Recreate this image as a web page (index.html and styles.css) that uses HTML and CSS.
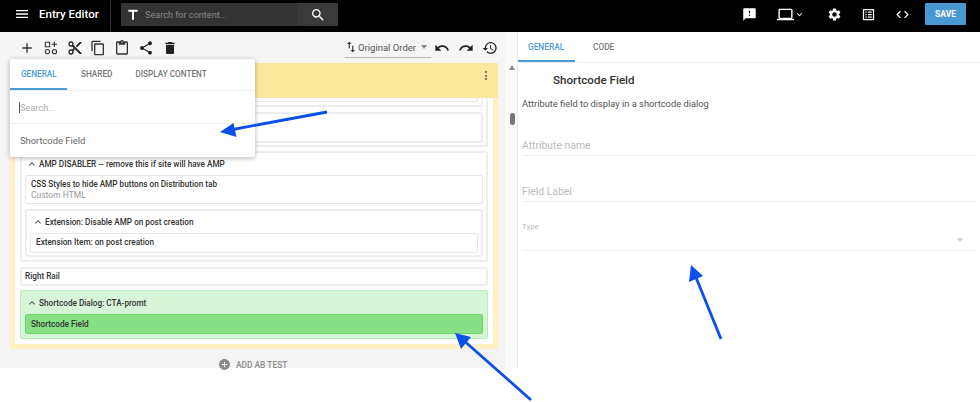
FILE: index.html
```html
<!DOCTYPE html>
<html lang="en">
<head>
<meta charset="utf-8">
<title>Entry Editor</title>
<link rel="stylesheet" href="styles.css">
</head>
<body>
<header class="topbar">
  <svg class="ic menu" viewBox="0 0 24 24" width="16" height="16"><path fill="#fff" d="M3 18h18v-2H3v2zm0-5h18v-2H3v2zm0-7v2h18V6H3z"/></svg>
  <div class="app-title">Entry Editor</div>
  <div class="search">
    <div class="search-main">
      <svg viewBox="0 0 24 24" width="16" height="16"><path fill="#fff" d="M5 4v3h5.500v12h3V7H19V4z"/></svg>
      <span>Search for content...</span>
    </div>
    <div class="search-btn">
      <svg viewBox="0 0 24 24" width="16" height="16"><path fill="#fff" d="M15.500 14h-.79l-.28-.27A6.470 6.470 0 0 0 16 9.500 6.500 6.500 0 1 0 9.500 16c1.610 0 3.090-.59 4.230-1.570l.27.28v.79l5 4.990L20.490 19l-4.990-5zm-6 0C7.010 14 5 11.990 5 9.500S7.010 5 9.500 5 14 7.010 14 9.500 11.990 14 9.500 14z"/></svg>
    </div>
  </div>
  <div class="top-actions">
    <svg class="a1" viewBox="0 0 24 24" width="15" height="15"><path fill="#fff" d="M20 2H4c-1.100 0-2 .9-2 2v18l4-4h14c1.100 0 2-.9 2-2V4c0-1.100-.9-2-2-2zm-7 12h-2v-2h2v2zm0-4h-2V6h2v4z"/></svg>
    <svg class="a2" viewBox="0 0 24 24" width="17" height="17"><path fill="#fff" d="M20 18c1.100 0 2-.9 2-2V6c0-1.100-.9-2-2-2H4c-1.100 0-2 .9-2 2v10c0 1.100.9 2 2 2H0v2h24v-2h-4zM4 5.500h16v11H4v-11z"/></svg>
    <svg class="a3" viewBox="0 0 24 24" width="11" height="11"><path fill="#fff" d="M7.410 8.590 12 13.170l4.590-4.580L18 10l-6 6-6-6z"/></svg>
    <svg class="a4" viewBox="0 0 24 24" width="15" height="15"><path fill="#fff" d="M19.140 12.940c.04-.3.060-.61.060-.94s-.02-.64-.07-.94l2.030-1.580a.49.49 0 0 0 .12-.61l-1.920-3.320a.49.49 0 0 0-.59-.22l-2.390.96a7 7 0 0 0-1.620-.94l-.36-2.540a.48.48 0 0 0-.48-.41h-3.840a.47.47 0 0 0-.47.41l-.36 2.540c-.59.24-1.130.57-1.620.94l-2.390-.96a.49.49 0 0 0-.59.22L2.740 8.870a.48.48 0 0 0 .12.61l2.030 1.580c-.05.3-.09.63-.09.94s.02.64.07.94l-2.030 1.580a.49.49 0 0 0-.12.61l1.920 3.320c.12.22.37.29.59.22l2.390-.96c.5.38 1.030.7 1.620.94l.36 2.540c.05.24.24.41.48.41h3.840c.24 0 .44-.17.47-.41l.36-2.540c.59-.24 1.130-.56 1.620-.94l2.390.96c.22.08.47 0 .59-.22l1.920-3.320a.48.48 0 0 0-.12-.61l-2.010-1.580zM12 15.600A3.610 3.610 0 0 1 8.400 12 3.610 3.610 0 0 1 12 8.400a3.610 3.610 0 0 1 3.600 3.600 3.610 3.610 0 0 1-3.600 3.600z"/></svg>
    <svg class="a5" viewBox="0 0 24 24" width="15" height="15"><path fill="#fff" d="M19 5v14H5V5h14m1.100-2H3.900c-.5 0-.9.4-.9.9v16.200c0 .4.400.9.900.9h16.200c.4 0 .9-.5.9-.9V3.900c0-.5-.5-.9-.9-.9zM11 7h6v2h-6V7zm0 4h6v2h-6v-2zm0 4h6v2h-6zM7 7h2v2H7zm0 4h2v2H7zm0 4h2v2H7z"/></svg>
    <svg class="a6" viewBox="0 0 24 24" width="15" height="15"><path fill="#fff" d="M9.400 16.600 4.800 12l4.600-4.600L8 6l-6 6 6 6 1.400-1.400zm5.200 0 4.600-4.600-4.600-4.600L16 6l6 6-6 6-1.400-1.400z"/></svg>
    <button class="save">SAVE</button>
  </div>
</header>

<main class="workspace">
  <section class="editor">
    <div class="toolbar">
      <div class="tools">
        <svg viewBox="0 0 24 24" width="16" height="16"><path fill="#333" d="M19 13h-6v6h-2v-6H5v-2h6V5h2v6h6v2z"/></svg>
        <svg viewBox="0 0 24 24" width="16" height="16"><path fill="none" stroke="#333" stroke-width="1.600" d="M3.500 3.500h6.500v6.500H3.500zM3.500 17.500a3.200 3.200 0 1 0 6.400 0 3.200 3.200 0 1 0-6.400 0M14 17.500a3.200 3.200 0 1 0 6.400 0 3.200 3.200 0 1 0-6.400 0"/><path fill="#333" d="M16.200 2.500h1.800v3h3v1.800h-3v3h-1.800v-3h-3V5.500h3z"/></svg>
        <svg viewBox="0 0 24 24" width="16" height="16"><path fill="#222" d="M9.640 7.640c.23-.5.360-1.050.360-1.640 0-2.210-1.790-4-4-4S2 3.790 2 6s1.790 4 4 4c.59 0 1.140-.13 1.640-.36L10 12l-2.360 2.360C7.140 14.130 6.590 14 6 14c-2.210 0-4 1.790-4 4s1.790 4 4 4 4-1.790 4-4c0-.59-.13-1.140-.36-1.640L12 14l7 7h3v-1L9.640 7.640zM6 8a2 2 0 1 1 0-4 2 2 0 0 1 0 4zm0 12a2 2 0 1 1 0-4 2 2 0 0 1 0 4zm6-7.500a.5.5 0 1 1 0-1 .5.5 0 0 1 0 1zM19 3l-6 6 2 2 7-7V3h-3z"/></svg>
        <svg viewBox="0 0 24 24" width="16" height="16"><path fill="#333" d="M16 1H4c-1.100 0-2 .9-2 2v14h2V3h12V1zm3 4H8c-1.100 0-2 .9-2 2v14c0 1.100.9 2 2 2h11c1.100 0 2-.9 2-2V7c0-1.100-.9-2-2-2zm0 16H8V7h11v14z"/></svg>
        <svg viewBox="0 0 24 24" width="16" height="16"><path fill="#333" d="M19 2h-4.180C14.400.84 13.300 0 12 0c-1.300 0-2.400.84-2.820 2H5c-1.100 0-2 .9-2 2v16c0 1.100.9 2 2 2h14c1.100 0 2-.9 2-2V4c0-1.100-.9-2-2-2zm-7 0c.55 0 1 .45 1 1s-.45 1-1 1-1-.45-1-1 .45-1 1-1zm7 18H5V4h2v3h10V4h2v16z"/></svg>
        <svg viewBox="0 0 24 24" width="16" height="16"><path fill="#222" d="M18 16.080c-.76 0-1.440.3-1.960.77L8.910 12.700c.05-.23.090-.46.090-.7s-.04-.47-.09-.7l7.050-4.110c.54.5 1.250.81 2.040.81 1.660 0 3-1.340 3-3s-1.340-3-3-3-3 1.340-3 3c0 .24.040.47.090.7L8.040 9.810C7.500 9.310 6.790 9 6 9c-1.660 0-3 1.340-3 3s1.340 3 3 3c.79 0 1.500-.31 2.040-.81l7.120 4.160c-.05.21-.08.43-.08.65 0 1.610 1.310 2.920 2.920 2.920s2.920-1.310 2.920-2.920-1.310-2.920-2.920-2.920z"/></svg>
        <svg viewBox="0 0 24 24" width="16" height="16"><path fill="#222" d="M6 19c0 1.100.9 2 2 2h8c1.100 0 2-.9 2-2V7H6v12zM19 4h-3.500l-1-1h-5l-1 1H5v2h14V4z"/></svg>
      </div>
      <div class="tools-right">
        <div class="order">
          <svg viewBox="0 0 24 24" width="14" height="14"><path fill="#333" d="M16 17.010V10h-2v7.010h-3L15 21l4-3.990h-3zM9 3 5 6.990h3V14h2V6.990h3L9 3z"/></svg>
          <span>Original Order</span>
          <i class="caret"></i>
        </div>
        <svg viewBox="0 0 24 24" width="16" height="16"><path fill="#222" d="M12.500 8c-2.650 0-5.050.99-6.900 2.600L2 7v9h9l-3.620-3.620c1.390-1.160 3.160-1.880 5.120-1.880 3.540 0 6.550 2.310 7.600 5.500l2.370-.78C21.080 11.030 17.150 8 12.500 8z"/></svg>
        <svg viewBox="0 0 24 24" width="16" height="16"><path fill="#222" d="M18.400 10.600C16.550 8.990 14.150 8 11.500 8c-4.650 0-8.580 3.030-9.960 7.220L3.900 16c1.050-3.190 4.050-5.500 7.600-5.500 1.950 0 3.730.72 5.120 1.880L13 16h9V7l-3.600 3.600z"/></svg>
        <svg viewBox="0 0 24 24" width="16" height="16"><path fill="#222" d="M13 3a9 9 0 0 0-9 9H1l3.890 3.890.07.14L9 12H6c0-3.870 3.130-7 7-7s7 3.130 7 7-3.130 7-7 7c-1.930 0-3.680-.79-4.940-2.060l-1.420 1.420A8.950 8.950 0 0 0 13 21a9 9 0 0 0 0-18zm-1 5v5l4.280 2.540.72-1.210-3.500-2.080V8H12z"/></svg>
      </div>
    </div>
    <div class="canvas">
      <div class="root">
        <div class="root-head"><span class="dots"><i></i><i></i><i></i></span></div>
        <div class="tree">
          <div class="group upper">
            <div class="stub"><div class="stub-inner"></div></div>
            <div class="blank"></div>
          </div>
          <div class="group amp">
            <div class="group-head"><svg class="chev" viewBox="0 0 24 24" width="12" height="12"><path fill="#555" d="M7.410 15.410 12 10.830l4.590 4.580L18 14l-6-6-6 6z"/></svg>AMP DISABLER -- remove this if site will have AMP</div>
            <div class="card two"><b>CSS Styles to hide AMP buttons on Distribution tab</b><small>Custom HTML</small></div>
            <div class="group ext">
              <div class="group-head"><svg class="chev" viewBox="0 0 24 24" width="12" height="12"><path fill="#555" d="M7.410 15.410 12 10.830l4.590 4.580L18 14l-6-6-6 6z"/></svg>Extension: Disable AMP on post creation</div>
              <div class="card one"><b>Extension Item: on post creation</b></div>
            </div>
          </div>
          <div class="card rail"><b>Right Rail</b></div>
          <div class="group green">
            <div class="group-head"><svg class="chev" viewBox="0 0 24 24" width="12" height="12"><path fill="#555" d="M7.410 15.410 12 10.830l4.590 4.580L18 14l-6-6-6 6z"/></svg>Shortcode Dialog: CTA-promt</div>
            <div class="card selected"><b>Shortcode Field</b></div>
          </div>
        </div>
      </div>
      <div class="ab"><svg viewBox="0 0 24 24" width="13" height="13"><path fill="#8a8a8a" d="M12 2C6.480 2 2 6.480 2 12s4.480 10 10 10 10-4.480 10-10S17.520 2 12 2zm5 11h-4v4h-2v-4H7v-2h4V7h2v4h4v2z"/></svg>ADD AB TEST</div>
    </div>
    <div class="popup">
      <div class="tabs pop-tabs">
        <span class="tab active">GENERAL</span><span class="tab">SHARED</span><span class="tab">DISPLAY CONTENT</span>
      </div>
      <div class="pop-search"><i class="cursor"></i>Search...</div>
      <div class="pop-item">Shortcode Field</div>
    </div>
  </section>
  <div class="scroll"><i class="up"></i><i class="thumb"></i></div>
  <aside class="panel">
    <div class="tabs side-tabs">
      <span class="tab active">GENERAL</span><span class="tab">CODE</span>
    </div>
    <h2>Shortcode Field</h2>
    <p>Attribute field to display in a shortcode dialog</p>
    <div class="field f1">Attribute name</div>
    <div class="field f2">Field Label</div>
    <div class="field f3"><small>Type</small><i class="caret light"></i></div>
  </aside>
</main>

<svg class="arrows" viewBox="0 0 980 402" width="980" height="402">
  <g stroke="#0b50e8" stroke-width="2.800" fill="#0b50e8">
    <path d="M327 112 230 130"/><path stroke="none" d="M220 132 233.500 123 236.500 137z"/>
    <path d="M531 400 462 339"/><path stroke="none" d="M455 333 471 337 461 349z"/>
    <path d="M721 339 695 275"/><path stroke="none" d="M691 265 703 276 689 282z"/>
  </g>
</svg>
</body>
</html>
```
FILE: styles.css
```css
* { box-sizing: border-box; }
html, body { margin: 0; height: 402px; overflow: hidden; background: #fff; }
body { font-family: Roboto, "Liberation Sans", sans-serif; font-size: 11px; color: #333; position: relative; }
svg { display: block; flex: none; }

.topbar { height: 32px; background: #000; display: flex; align-items: center; }
.menu { margin-left: 14px; margin-top: -4px; }
.app-title { margin-left: 9px; width: 72px; height: 32px; line-height: 28px; color: #fff; font-size: 11.600px; font-weight: 500; border-right: 1px solid #2a2a2a; }
.search { margin: -3px 0 0 10px; width: 217px; height: 23px; display: flex; background: #3a3a3a; }
.search-main { width: 176px; background: #333; display: flex; align-items: center; padding-left: 4px; color: #8a8a8a; font-size: 9.100px; gap: 4px; }
.search-btn { flex: 1; display: flex; align-items: center; justify-content: center; }
.top-actions { margin-left: auto; display: flex; align-items: center; margin-top: -4px; }
.a1 { margin-right: 20px; }
.a3 { margin: 0 22px 0 0; }
.a4 { margin-right: 19.500px; }
.a5 { margin-right: 18.500px; }
.a6 { margin-right: 15.500px; }
.save { width: 41px; height: 22px; margin-right: 14px; padding: 0; border: 0; border-radius: 1px; background: #4a98d3; color: #fff; font: 700 8.500px Roboto, sans-serif; }

.workspace { display: flex; height: 336px; align-items: flex-start; }
.editor { width: 505px; position: relative; }
.toolbar { height: 31px; background: #f5f5f5; display: flex; justify-content: space-between; align-items: center; padding: 0 0 0 19px; }
.tools { display: flex; gap: 7.800px; }
.tools-right { display: flex; align-items: center; gap: 8px; padding-right: 7px; }
.order { display: flex; align-items: center; width: 86px; height: 20px; border-bottom: 1px solid #bbb; margin-right: -5px; color: #555; font-size: 9.500px; white-space: nowrap; }
.order svg { margin-left: -1px; }
.caret { width: 0; height: 0; border: 3.500px solid transparent; border-top: 4px solid #888; border-bottom: 0; margin-left: 5px; }
.canvas { height: 305px; background: #f4f4f4; padding: 0 7px 0 10px; }
.root { height: 286px; border: 5px solid #fdf1c4; border-top: 0; background: #fff; border-radius: 1px; }
.root-head { height: 35px; margin: 0 -5px; background: #fbe89c; display: flex; justify-content: flex-end; padding: 8px 11.500px 0 0; }
.dots { display: flex; flex-direction: column; gap: 1.500px; }
.dots i { width: 2px; height: 2px; background: #555; border-radius: 50%; }
.tree { padding: 0 5px; display: flex; flex-direction: column; }
.group { border: 2px solid #eee; border-radius: 2px; }
.upper { height: 49px; border-top: 0; padding: 0 3px; }
.stub { height: 9px; border: 2px solid #eee; border-top: 0; padding: 0 3px; }
.stub-inner { height: 4px; border: 1px solid #e6e6e6; border-top: 0; }
.blank { height: 31px; margin-top: 5px; border: 2px solid #eee; border-radius: 2px; }
.group-head { display: flex; align-items: center; font-weight: 500; color: #333; font-size: 8.200px; gap: 1px; height: 22px; padding-left: 1px; }
.amp { margin-top: 4px; height: 111px; padding: 0 3px; }
.ext .group-head { padding-left: 2px; }
.card { background: #fff; border: 1px solid #e6e6e6; border-radius: 2px; padding-left: 5px; font-size: 8.200px; }
.card b { font-weight: 500; display: block; color: #333; }
.card small { font-size: 8.500px; color: #999; display: block; margin-top: 1px; }
.two { height: 29px; padding-top: 3px; }
.ext { margin-top: 5px; height: 48px; padding: 0 3px; }
.one { height: 20px; line-height: 17px; }
.rail { margin-top: 5px; height: 19px; line-height: 15px; border: 2px solid #eee; padding-left: 3px; }
.green { margin-top: 4px; height: 49px; background: #d7f5d7; border: 1px solid #b9eeb9; padding: 0 4px; }
.green .group-head { height: 23px; padding-left: 1px; }
.selected { height: 20px; line-height: 18px; background: #86e086; border: 1px solid #6ad66a; color: #333; }
.ab { height: 19px; display: flex; align-items: center; padding-left: 208px; color: #8c8c8c; font-weight: 500; font-size: 8.400px; gap: 5px; padding-top: 12px; }

.popup { position: absolute; left: 10px; top: 27px; width: 245px; height: 98px; background: #fff; box-shadow: 0 1px 5px rgba(0,0,0,.3); border-radius: 2px; }
.tabs { display: flex; font-size: 8.300px; font-weight: 500; color: #777; }
.tab { display: block; }
.pop-tabs { height: 32px; border-bottom: 1px solid #eee; align-items: stretch; line-height: 31px; font-size: 8.200px; }
.pop-tabs .tab { padding: 0 0 0 11px; width: 57px; margin-right: 14px; }
.pop-tabs .tab + .tab { padding: 0; width: auto; margin-right: 23px; }
.tab.active { color: #4c9bd6; border-bottom: 2px solid #4c9bd6; }
.pop-search { height: 33px; border-bottom: 1px solid #eee; padding-left: 9px; line-height: 33px; color: #aaa; font-size: 9.200px; display: flex; align-items: center; }
.cursor { width: 1px; height: 11px; background: #555; }
.pop-item { padding: 11px 0 0 10px; color: #666; font-size: 9.350px; }

.scroll { width: 13px; height: 336px; background: #fbfbfb; border-right: 1px solid #e8e8e8; position: relative; }
.up { position: absolute; left: 4px; top: 33px; border: 3.500px solid transparent; border-bottom: 5px solid #888; border-top: 0; }
.thumb { position: absolute; left: 5px; top: 81px; width: 5px; height: 12px; background: #777; border-radius: 3px; }

.panel { flex: 1; height: 336px; }
.side-tabs { height: 31px; border-bottom: 1px solid #eee; line-height: 30px; }
.side-tabs .tab { padding-left: 10px; width: 57px; margin-right: 8px; }
.side-tabs .tab + .tab { width: auto; }
.panel h2 { margin: 9px 0 0 35px; font-size: 11.600px; line-height: 16px; font-weight: 500; color: #333; }
.panel p { margin: 9px 0 0 4px; font-size: 9.300px; line-height: 14px; color: #555; }
.field { margin: 0 4px; border-bottom: 1px solid #eee; color: #bbb; font-size: 10.400px; position: relative; }
.f1 { margin-top: 28px; height: 17px; }
.f2 { margin-top: 29px; height: 17px; }
.f3 { margin-top: 20px; height: 29px; }
.f3 small { font-size: 8px; display: block; }
.caret.light { position: absolute; right: 13px; top: 16px; margin: 0; border-top-color: #ccc; }

.arrows { position: absolute; left: 0; top: 0; pointer-events: none; }
```
